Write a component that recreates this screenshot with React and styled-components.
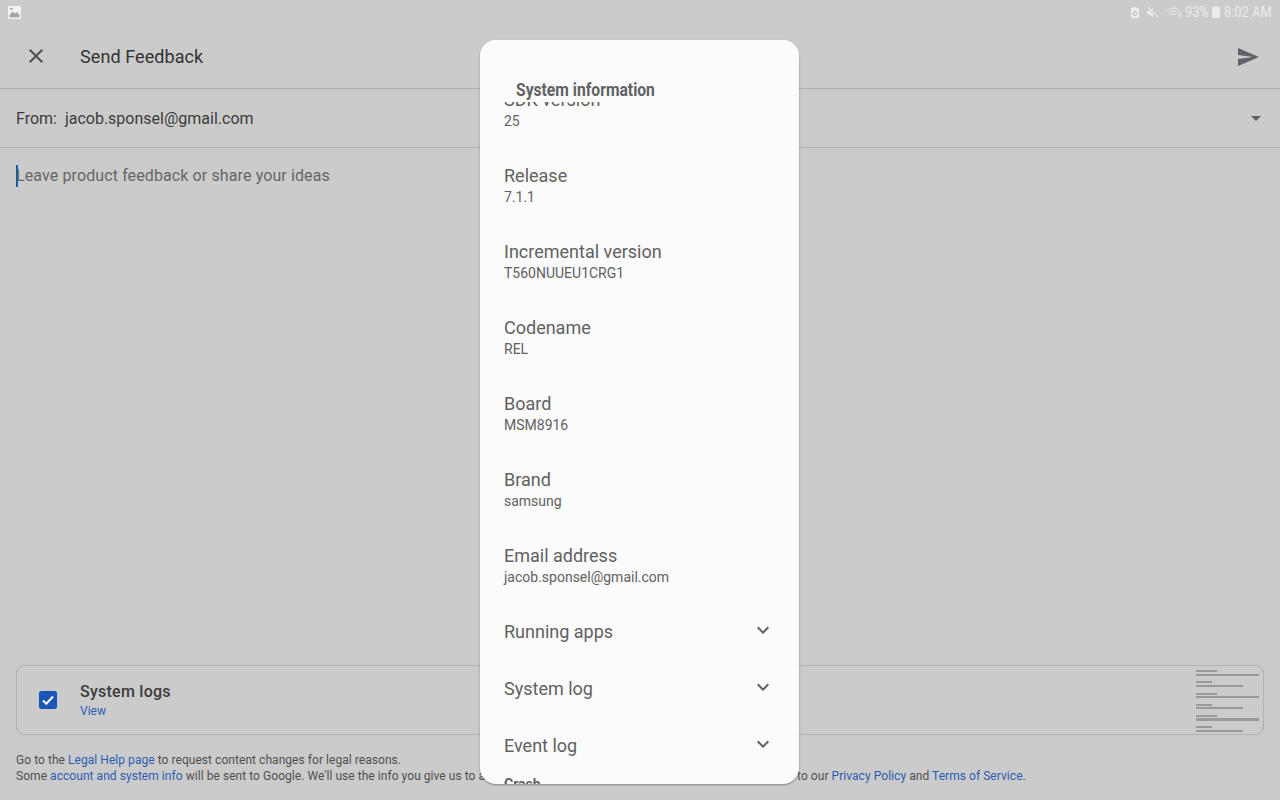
import React from "react";
import styled, { createGlobalStyle } from "styled-components";

const GlobalStyle = createGlobalStyle`
  html, body {
    margin: 0;
    padding: 0;
    background: #cbcbcb;
  }
  * {
    box-sizing: border-box;
  }
`;

const Page = styled.div`
  width: 1280px;
  height: 800px;
  position: relative;
  overflow: hidden;
  display: flex;
  flex-flow: column;
  background: #cbcbcb;
  font-family: Roboto, "Liberation Sans", sans-serif;
  color: #4a4a4a;
`;

const StatusBar = styled.div`
  height: 24px;
  flex: none;
  display: flex;
  align-items: center;
  justify-content: space-between;
  padding: 0 8px;
  color: #ececec;
`;

const StatusRight = styled.div`
  display: flex;
  align-items: center;
`;

const StatusText = styled.span`
  font-size: 15px;
  margin: ${props => props.$margin || "0"};
  width: ${props => props.$width}px;
  white-space: nowrap;
  transform: scaleX(0.86);
  transform-origin: left center;
`;

const StatusIcon = styled.svg`
  display: block;
  margin-right: ${props => props.$gap || 0}px;
`;

const Toolbar = styled.div`
  height: 65px;
  flex: none;
  display: flex;
  align-items: center;
  justify-content: space-between;
  padding: 0 20px 0 24px;
  border-bottom: 1px solid #aeaeae;
`;

const ToolbarLeft = styled.div`
  display: flex;
  align-items: center;
  gap: 32px;
`;

const ToolbarTitle = styled.span`
  font-size: 18px;
  line-height: 24px;
  padding-top: 2px;
  letter-spacing: 0.08px;
  color: #333;
`;

const SendIcon = styled.svg`
  margin-top: 2px;
`;

const FromRow = styled.div`
  height: 59px;
  flex: none;
  display: flex;
  align-items: center;
  justify-content: space-between;
  padding: 0 16px;
  font-size: 16px;
  color: #3c3c3c;
  border-bottom: 1px solid #aeaeae;
`;

const FromText = styled.span`
  white-space: pre;
  padding-top: 1px;
`;

const DropArrow = styled.div`
  width: 0;
  height: 0;
  border-left: 5px solid transparent;
  border-right: 5px solid transparent;
  border-top: 5px solid #5f5f5f;
  margin-right: 3px;
`;

const Body = styled.div`
  flex: 1;
  padding: 17px 16px;
  font-size: 16px;
  line-height: 22px;
  color: #666;
  letter-spacing: 0.11px;
`;

const Caret = styled.span`
  display: inline-block;
  width: 2px;
  height: 22px;
  margin-right: -2px;
  vertical-align: top;
  background: #1a56b8;
`;

const LogsCard = styled.div`
  height: 70px;
  flex: none;
  margin: 0 16px;
  display: flex;
  align-items: center;
  justify-content: space-between;
  padding: 0 3px 0 22px;
  border: 1px solid #b0b0b0;
  border-radius: 8px;
`;

const LogsLeft = styled.div`
  display: flex;
  align-items: center;
  gap: 23px;
`;

const CheckBox = styled.div`
  width: 18px;
  height: 18px;
  border-radius: 2px;
  background: #1a56b8;
  display: flex;
  align-items: center;
  justify-content: center;
`;

const LogsText = styled.div`
  display: flex;
  flex-flow: column;
  padding-top: 2px;
`;

const LogsTitle = styled.span`
  font-size: 16px;
  line-height: 20px;
  font-weight: 500;
  letter-spacing: 0.25px;
  color: #3c3c3c;
`;

const LogsLink = styled.a`
  font-size: 12px;
  line-height: 18px;
  color: #2a5db0;
`;

const Footer = styled.div`
  flex: none;
  height: 65px;
  padding: 17px 16px 0;
  font-size: 12px;
  line-height: 16px;
  letter-spacing: 0.05px;
  color: #4f4f4f;
  white-space: nowrap;
`;

const FooterLink = styled.a`
  color: #2a5db0;
`;

const Dialog = styled.div`
  position: absolute;
  left: 480px;
  top: 40px;
  width: 319px;
  height: 744px;
  display: flex;
  flex-flow: column;
  background: #fbfbfb;
  border-radius: 16px;
  overflow: hidden;
  box-shadow: 0 1px 2px rgba(0, 0, 0, 0.35);
  color: #616161;
`;

const DialogHeader = styled.div`
  height: 62px;
  flex: none;
  padding: 38px 0 0 36px;
  background: #fbfbfb;
  position: relative;
  z-index: 1;
`;

const DialogTitle = styled.div`
  width: 170px;
  font-size: 18px;
  line-height: 24px;
  font-weight: 700;
  white-space: nowrap;
  transform: scaleX(0.87);
  transform-origin: left center;
`;

const InfoList = styled.div`
  flex: 1;
  min-height: 0;
  margin-top: -15px;
  padding: 0 24px;
`;

const InfoItem = styled.div`
  height: 76px;
`;

const InfoLabel = styled.div`
  height: 24px;
  padding-top: 1px;
  font-size: 18px;
  line-height: 24px;
`;

const InfoValue = styled.div`
  font-size: 14px;
  line-height: 20px;
`;

const ExpandRow = styled.div`
  height: 57px;
  display: flex;
  justify-content: space-between;
`;

const ChevronIcon = styled.svg`
  margin-top: -1px;
`;

const CrashLabel = styled.div`
  margin-top: -16px;
  font-size: 14px;
  line-height: 20px;
  font-weight: 700;
`;

const infoItems = [
  ["SDK version", "25"],
  ["Release", "7.1.1"],
  ["Incremental version", "T560NUUEU1CRG1"],
  ["Codename", "REL"],
  ["Board", "MSM8916"],
  ["Brand", "samsung"],
  ["Email address", "jacob.sponsel@gmail.com"]
];

const expandRows = ["Running apps", "System log", "Event log"];

const Chevron = () => (
  <ChevronIcon width="24" height="24" viewBox="0 0 24 24" fill="#5f5f5f">
    <path d="M7.41 8.59L12 13.17l4.59-4.58L18 10l-6 6-6-6 1.41-1.41z" />
  </ChevronIcon>
);

const Thumbnail = () => (
  <svg width="64" height="66" viewBox="0 0 64 66" fill="#999">
    <rect x="0" y="3" width="21" height="2" />
    <rect x="0" y="7" width="63" height="2" />
    <rect x="0" y="14" width="16" height="2" />
    <rect x="0" y="18" width="47" height="2" />
    <rect x="0" y="26" width="21" height="2" />
    <rect x="0" y="29" width="63" height="2" />
    <rect x="0" y="37" width="16" height="2" />
    <rect x="0" y="40" width="47" height="2" />
    <rect x="0" y="48" width="21" height="2" />
    <rect x="0" y="51" width="63" height="3" />
    <rect x="0" y="59" width="16" height="2" />
    <rect x="0" y="63" width="47" height="2" />
  </svg>
);

export default function App() {
  return (
    <Page>
      <GlobalStyle />
      <StatusBar>
        <StatusIcon width="13" height="13" viewBox="0 0 13 13">
          <rect width="13" height="13" rx="1" fill="#f2f2f2" />
          <path d="M1.500 9l3-3.500 2 2 2-1.500 3 2.500V11.500H1.500z" fill="#a8a8a8" />
          <rect x="2" y="2" width="3" height="1.500" fill="#a8a8a8" />
        </StatusIcon>
        <StatusRight>
          <StatusIcon $gap={8} width="8" height="11" viewBox="0 0 8 11">
            <path d="M2.500 0h3v1H8v10H0V1h2.500z" fill="#ececec" />
            <circle cx="4" cy="6.500" r="1.800" fill="none" stroke="#b4b4b4" />
          </StatusIcon>
          <StatusIcon $gap={7} width="11" height="11" viewBox="0 0 11 11">
            <path d="M0 3.500h2.500L6 .5v10L2.500 7.500H0z" fill="#ececec" />
            <path d="M1 0l10 10.500" stroke="#cbcbcb" strokeWidth="2.500" />
            <path d="M1 0l10 10.500" stroke="#ececec" strokeWidth="1.200" />
          </StatusIcon>
          <StatusIcon $gap={3} width="17" height="12" viewBox="0 0 17 12" fill="none" stroke="#ececec">
            <path d="M1 4.500a10 10 0 0 1 13.500 0" />
            <path d="M3 6.700a7 7 0 0 1 9.500 0" />
            <path d="M5 8.800a4 4 0 0 1 5.500 0" />
            <path d="M13.500 7v4M15.500 7v4" />
          </StatusIcon>
          <StatusText $width={24} $margin="0 3px 0 0">93%</StatusText>
          <StatusIcon $gap={4} width="8" height="12" viewBox="0 0 8 12">
            <path d="M2.500 0h3v1H8v11H0V1h2.500z" fill="#ececec" />
          </StatusIcon>
          <StatusText $width={48}>8:02 AM</StatusText>
        </StatusRight>
      </StatusBar>

      <Toolbar>
        <ToolbarLeft>
          <svg width="24" height="24" viewBox="0 0 24 24" fill="#4f4f4f">
            <path d="M19 6.410L17.590 5 12 10.590 6.410 5 5 6.410 10.590 12 5 17.590 6.410 19 12 13.410 17.590 19 19 17.590 13.410 12z" />
          </svg>
          <ToolbarTitle>Send Feedback</ToolbarTitle>
        </ToolbarLeft>
        <SendIcon width="24" height="24" viewBox="0 0 24 24" fill="#5f6368">
          <path d="M2.010 21L23 12 2.010 3 2 10l15 2-15 2z" />
        </SendIcon>
      </Toolbar>

      <FromRow>
        <FromText>From:  jacob.sponsel@gmail.com</FromText>
        <DropArrow />
      </FromRow>

      <Body>
        <Caret />
        Leave product feedback or share your ideas
      </Body>

      <LogsCard>
        <LogsLeft>
          <CheckBox>
            <svg width="14" height="14" viewBox="0 0 14 14" fill="none" stroke="#fff" strokeWidth="2">
              <path d="M2 7.500l3.300 3.200L12 3.500" />
            </svg>
          </CheckBox>
          <LogsText>
            <LogsTitle>System logs</LogsTitle>
            <LogsLink>View</LogsLink>
          </LogsText>
        </LogsLeft>
        <Thumbnail />
      </LogsCard>

      <Footer>
        Go to the <FooterLink>Legal Help page</FooterLink> to request content changes for legal reasons.
        <br />
        Some <FooterLink>account and system info</FooterLink> will be sent to Google. We'll use the info you give us to address technical issues and improve our services, subject to our <FooterLink>Privacy Policy</FooterLink> and <FooterLink>Terms of Service</FooterLink>.
      </Footer>

      <Dialog>
        <DialogHeader>
          <DialogTitle>System information</DialogTitle>
        </DialogHeader>
        <InfoList>
          {infoItems.map(([label, value]) => (
            <InfoItem key={label}>
              <InfoLabel>{label}</InfoLabel>
              <InfoValue>{value}</InfoValue>
            </InfoItem>
          ))}
          {expandRows.map(label => (
            <ExpandRow key={label}>
              <InfoLabel>{label}</InfoLabel>
              <Chevron />
            </ExpandRow>
          ))}
          <CrashLabel>Crash</CrashLabel>
        </InfoList>
      </Dialog>
    </Page>
  );
}
